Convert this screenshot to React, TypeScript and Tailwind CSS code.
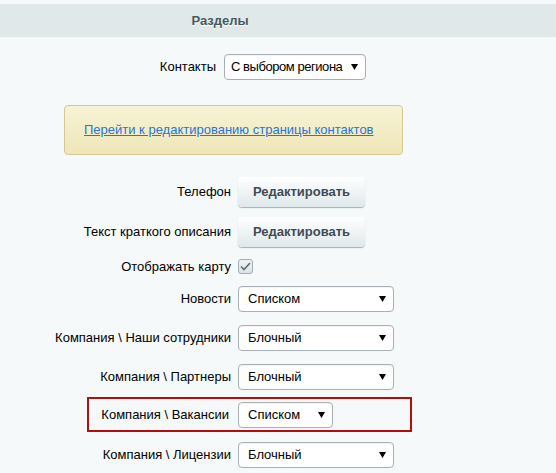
const font = { fontFamily: '"Liberation Sans", Arial, sans-serif' }

function Arrow() {
  return (
    <svg className="w-[7px] h-[6px] shrink-0" viewBox="0 0 7 6">
      <path d="M0 0h7L3.5 6z" fill="#000" />
    </svg>
  )
}

function Select({ value, width = 'w-[156px]', pl = 'pl-[9px]', tight = false }: { value: string; width?: string; pl?: string; tight?: boolean }) {
  return (
    <div
      className={`${width} h-[26px] flex items-center justify-between ${pl} pr-[7px] bg-white border border-[#a7b0b4] rounded-[4px] text-[13px] text-black whitespace-nowrap shadow-[inset_0_1px_1px_rgba(0,0,0,0.05)]`}
    >
      <span className={tight ? 'tracking-[-0.45px]' : ''}>{value}</span>
      <Arrow />
    </div>
  )
}

function Button() {
  return (
    <div className="w-[127px] h-[30px] flex items-center justify-center rounded-[4px] bg-gradient-to-b from-white to-[#dfe8eb] shadow-[0_1px_1px_rgba(0,0,0,0.3),inset_0_1px_0_#fff] text-[13px] font-bold text-[#3f4b54]">
      Редактировать
    </div>
  )
}

function Row({ label, children, mt }: { label: string; children: React.ReactNode; mt: string }) {
  return (
    <div className={`flex items-center ${mt}`}>
      <div className="w-[231px] shrink-0 text-right text-[13px] text-black">{label}</div>
      <div className="ml-[7px]">{children}</div>
    </div>
  )
}

export default function App() {
  return (
    <div className="w-[556px] h-[473px] overflow-hidden bg-[#f5f9f9] pt-[4px]" style={font}>
      <div className="h-[33px] bg-[#e0e8ea] flex items-center">
        <div className="w-[440px] text-center text-[13px] font-bold text-[#46595d] [text-shadow:0_1px_0_#fff]">
          Разделы
        </div>
      </div>

      <div className="flex items-center mt-[17px]">
        <div className="w-[216px] shrink-0 text-right text-[13px] text-black">Контакты</div>
        <div className="ml-[8px]">
          <Select value="С выбором региона" width="w-[142px]" pl="pl-[6px]" tight />
        </div>
      </div>

      <div className="mt-[25px] ml-[64px] w-[339px] h-[50px] flex items-center pl-[19px] rounded-[4px] border border-[#d6c893] bg-gradient-to-b from-[#f6f3d6] to-[#efe6b7]">
        <a href="#" className="text-[13px] text-[#2675d7] underline">
          Перейти к редактированию страницы контактов
        </a>
      </div>

      <Row label="Телефон" mt="mt-[22px]">
        <Button />
      </Row>
      <Row label="Текст краткого описания" mt="mt-[10px]">
        <Button />
      </Row>
      <div className="flex items-center mt-[12px] h-[15px]">
        <div className="w-[231px] shrink-0 text-right text-[13px] text-black">Отображать карту</div>
        <div className="ml-[7px] w-[15px] h-[15px] rounded-[3px] border border-[#a3adb2] bg-gradient-to-b from-[#f0f3f4] to-[#dde3e6] flex items-center justify-center">
          <svg className="w-[11px] h-[9px]" viewBox="0 0 11 9">
            <path d="M1 4.5l3 3L10 1" fill="none" stroke="#616b70" strokeWidth="1.6" />
          </svg>
        </div>
      </div>

      <Row label="Новости" mt="mt-[12px]">
        <Select value="Списком" />
      </Row>
      <Row label="Компания \ Наши сотрудники" mt="mt-[13px]">
        <Select value="Блочный" />
      </Row>
      <Row label="Компания \ Партнеры" mt="mt-[13px]">
        <Select value="Блочный" />
      </Row>

      <div className="mt-[7px] ml-[87px] w-[325px] h-[35px] border-2 border-[#b30d0d] flex items-center">
        <div className="w-[140px] shrink-0 text-right text-[13px] text-black">Компания \ Вакансии</div>
        <div className="ml-[9px]">
          <Select value="Списком" width="w-[95px]" />
        </div>
      </div>

      <Row label="Компания \ Лицензии" mt="mt-[10px]">
        <Select value="Блочный" />
      </Row>
    </div>
  )
}
